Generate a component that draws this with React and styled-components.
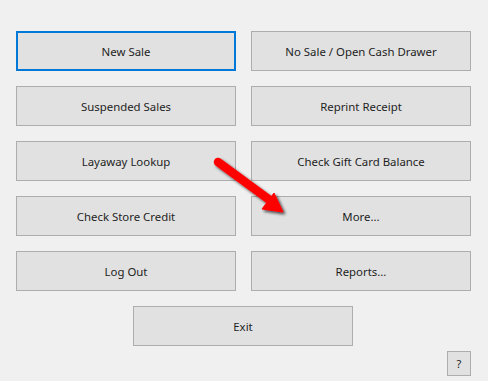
import React from 'react';
import styled, { createGlobalStyle } from 'styled-components';

const GlobalStyle = createGlobalStyle`
  html, body {
    margin: 0;
    padding: 0;
    background: #f0f0f0;
  }
  body {
    font-family: 'Noto Sans', 'Open Sans', sans-serif;
  }
`;

const Window = styled.div`
  position: relative;
  width: 488px;
  height: 381px;
  box-sizing: border-box;
  padding: 31px 17px 0 16px;
  background: #f0f0f0;
  display: flex;
  flex-direction: column;
`;

const ButtonGrid = styled.div`
  display: grid;
  grid-template-columns: 220px 220px;
  grid-auto-rows: 40px;
  column-gap: 15px;
  row-gap: 15px;
`;

const ExitRow = styled.div`
  display: flex;
  justify-content: center;
  margin-top: 15px;
  padding-right: 1px;
`;

const HelpRow = styled.div`
  display: flex;
  justify-content: flex-end;
  margin-top: 5px;
`;

const MenuButton = styled.button`
  box-sizing: border-box;
  width: 220px;
  height: 40px;
  margin: 0;
  padding: 0;
  background: #e1e1e1;
  border: ${p => (p.$focused ? '2px solid #0078d7' : '1px solid #adadad')};
  border-radius: 0;
  font-family: inherit;
  font-size: 11.4px;
  color: #1e1e1e;
  display: flex;
  align-items: center;
  justify-content: center;
`;

const HelpButton = styled(MenuButton)`
  width: 24px;
  height: 25px;
  font-size: 11px;
`;

const Arrow = styled.svg`
  position: absolute;
  left: 205px;
  top: 150px;
  width: 90px;
  height: 70px;
  overflow: visible;
`;

const leftButtons = [
  'New Sale',
  'Suspended Sales',
  'Layaway Lookup',
  'Check Store Credit',
  'Log Out',
];

const rightButtons = [
  'No Sale / Open Cash Drawer',
  'Reprint Receipt',
  'Check Gift Card Balance',
  'More...',
  'Reports...',
];

const App = () => {
  const cells = [];
  leftButtons.forEach((label, i) => {
    cells.push(
      <MenuButton key={`l${i}`} $focused={i === 0}>
        {label}
      </MenuButton>
    );
    cells.push(<MenuButton key={`r${i}`}>{rightButtons[i]}</MenuButton>);
  });

  return (
    <>
      <GlobalStyle />
      <Window>
        <ButtonGrid>{cells}</ButtonGrid>
        <ExitRow>
          <MenuButton>Exit</MenuButton>
        </ExitRow>
        <HelpRow>
          <HelpButton>?</HelpButton>
        </HelpRow>
        <Arrow viewBox="0 0 90 70">
          <defs>
            <filter id="shadow" x="-20%" y="-20%" width="140%" height="140%">
              <feGaussianBlur in="SourceAlpha" stdDeviation="1.5" />
              <feOffset dx="1.5" dy="2" />
              <feComponentTransfer>
                <feFuncA type="linear" slope="0.7" />
              </feComponentTransfer>
              <feMerge>
                <feMergeNode />
                <feMergeNode in="SourceGraphic" />
              </feMerge>
            </filter>
          </defs>
          <g filter="url(#shadow)" fill="#ff0000" stroke="#ff0000">
            <line x1="13" y1="12" x2="66" y2="51" strokeWidth="8.5" strokeLinecap="round" />
            <polygon points="69,43 78,62 57,59" strokeWidth="1" strokeLinejoin="round" />
          </g>
        </Arrow>
      </Window>
    </>
  );
};

export default App;
